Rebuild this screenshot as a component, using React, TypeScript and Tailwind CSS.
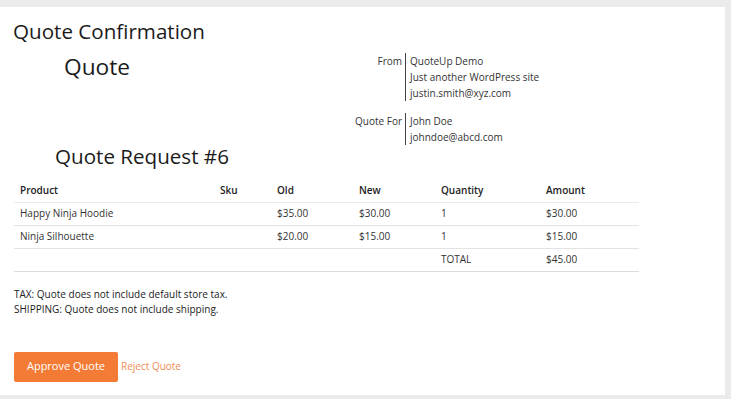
import React from "react";

const rows = [
  { product: "Happy Ninja Hoodie", sku: "", old: "$35.00", next: "$30.00", qty: "1", amount: "$30.00" },
  { product: "Ninja Silhouette", sku: "", old: "$20.00", next: "$15.00", qty: "1", amount: "$15.00" },
];

function Party({ label, lines }: { label: string; lines: string[] }) {
  return (
    <div className="flex">
      <div className="w-[60px] pr-[3px] text-right leading-[16px]">{label}</div>
      <div className="border-l border-[#444] pl-[4px] leading-[16px]">
        {lines.map((l) => (
          <div key={l}>{l}</div>
        ))}
      </div>
    </div>
  );
}

export default function App() {
  return (
    <div className="h-[399px] w-[731px] overflow-hidden bg-[#ebebeb] font-['Open_Sans',sans-serif] text-[#222]">
      <div className="mt-[7px] h-[388px] w-[725px] bg-white px-[14px] pt-[12px]">
        <h1 className="ml-[-1px] text-[20.6px] leading-[24px] text-[#1b1b1b]">Quote Confirmation</h1>

        <div className="flex">
          <div className="w-[331px] pl-[50px] pt-[10px] text-[22.7px] leading-[28px] text-[#1b1b1b]">Quote</div>
          <div className="mt-[10px] flex flex-col gap-[12px] text-[10px] text-[#333]">
            <Party
              label="From"
              lines={["QuoteUp Demo", "Just another WordPress site", "justin.smith@xyz.com"]}
            />
            <Party label="Quote For" lines={["John Doe", "johndoe@abcd.com"]} />
          </div>
        </div>

        <h2 className="ml-[41px] mt-[-1px] text-[20.6px] leading-[24px] text-[#1b1b1b]">Quote Request #6</h2>

        <table className="mt-[11px] w-[625px] border-collapse text-left text-[10px] text-[#333]">
          <thead>
            <tr className="h-[23px] border-b border-[#ebebeb]">
              <th className="w-[200px] px-[6px] font-semibold text-[#222]">Product</th>
              <th className="w-[57px] px-[6px] font-semibold text-[#222]">Sku</th>
              <th className="w-[82px] px-[6px] font-semibold text-[#222]">Old</th>
              <th className="w-[82px] px-[6px] font-semibold text-[#222]">New</th>
              <th className="w-[105px] px-[6px] font-semibold text-[#222]">Quantity</th>
              <th className="px-[6px] font-semibold text-[#222]">Amount</th>
            </tr>
          </thead>
          <tbody>
            {rows.map((r) => (
              <tr key={r.product} className="h-[23px] border-b border-[#e3e3e3]">
                <td className="px-[6px]">{r.product}</td>
                <td className="px-[6px]">{r.sku}</td>
                <td className="px-[6px]">{r.old}</td>
                <td className="px-[6px]">{r.next}</td>
                <td className="px-[6px]">{r.qty}</td>
                <td className="px-[6px]">{r.amount}</td>
              </tr>
            ))}
            <tr className="h-[23px] border-b border-[#dcdcdc]">
              <td className="px-[6px]" />
              <td className="px-[6px]" />
              <td className="px-[6px]" />
              <td className="px-[6px]" />
              <td className="px-[6px]">TOTAL</td>
              <td className="px-[6px]">$45.00</td>
            </tr>
          </tbody>
        </table>

        <div className="mt-[15px] text-[10px] leading-[15px] text-[#222]">
          <p>TAX: Quote does not include default store tax.</p>
          <p>SHIPPING: Quote does not include shipping.</p>
        </div>

        <div className="mt-[35px] flex items-center gap-[3px]">
          <button className="h-[30px] w-[104px] rounded-[2px] bg-[#f47b36] text-[11px] text-white">
            Approve Quote
          </button>
          <a className="text-[10px] text-[#f08b55]">Reject Quote</a>
        </div>
      </div>
    </div>
  );
}
